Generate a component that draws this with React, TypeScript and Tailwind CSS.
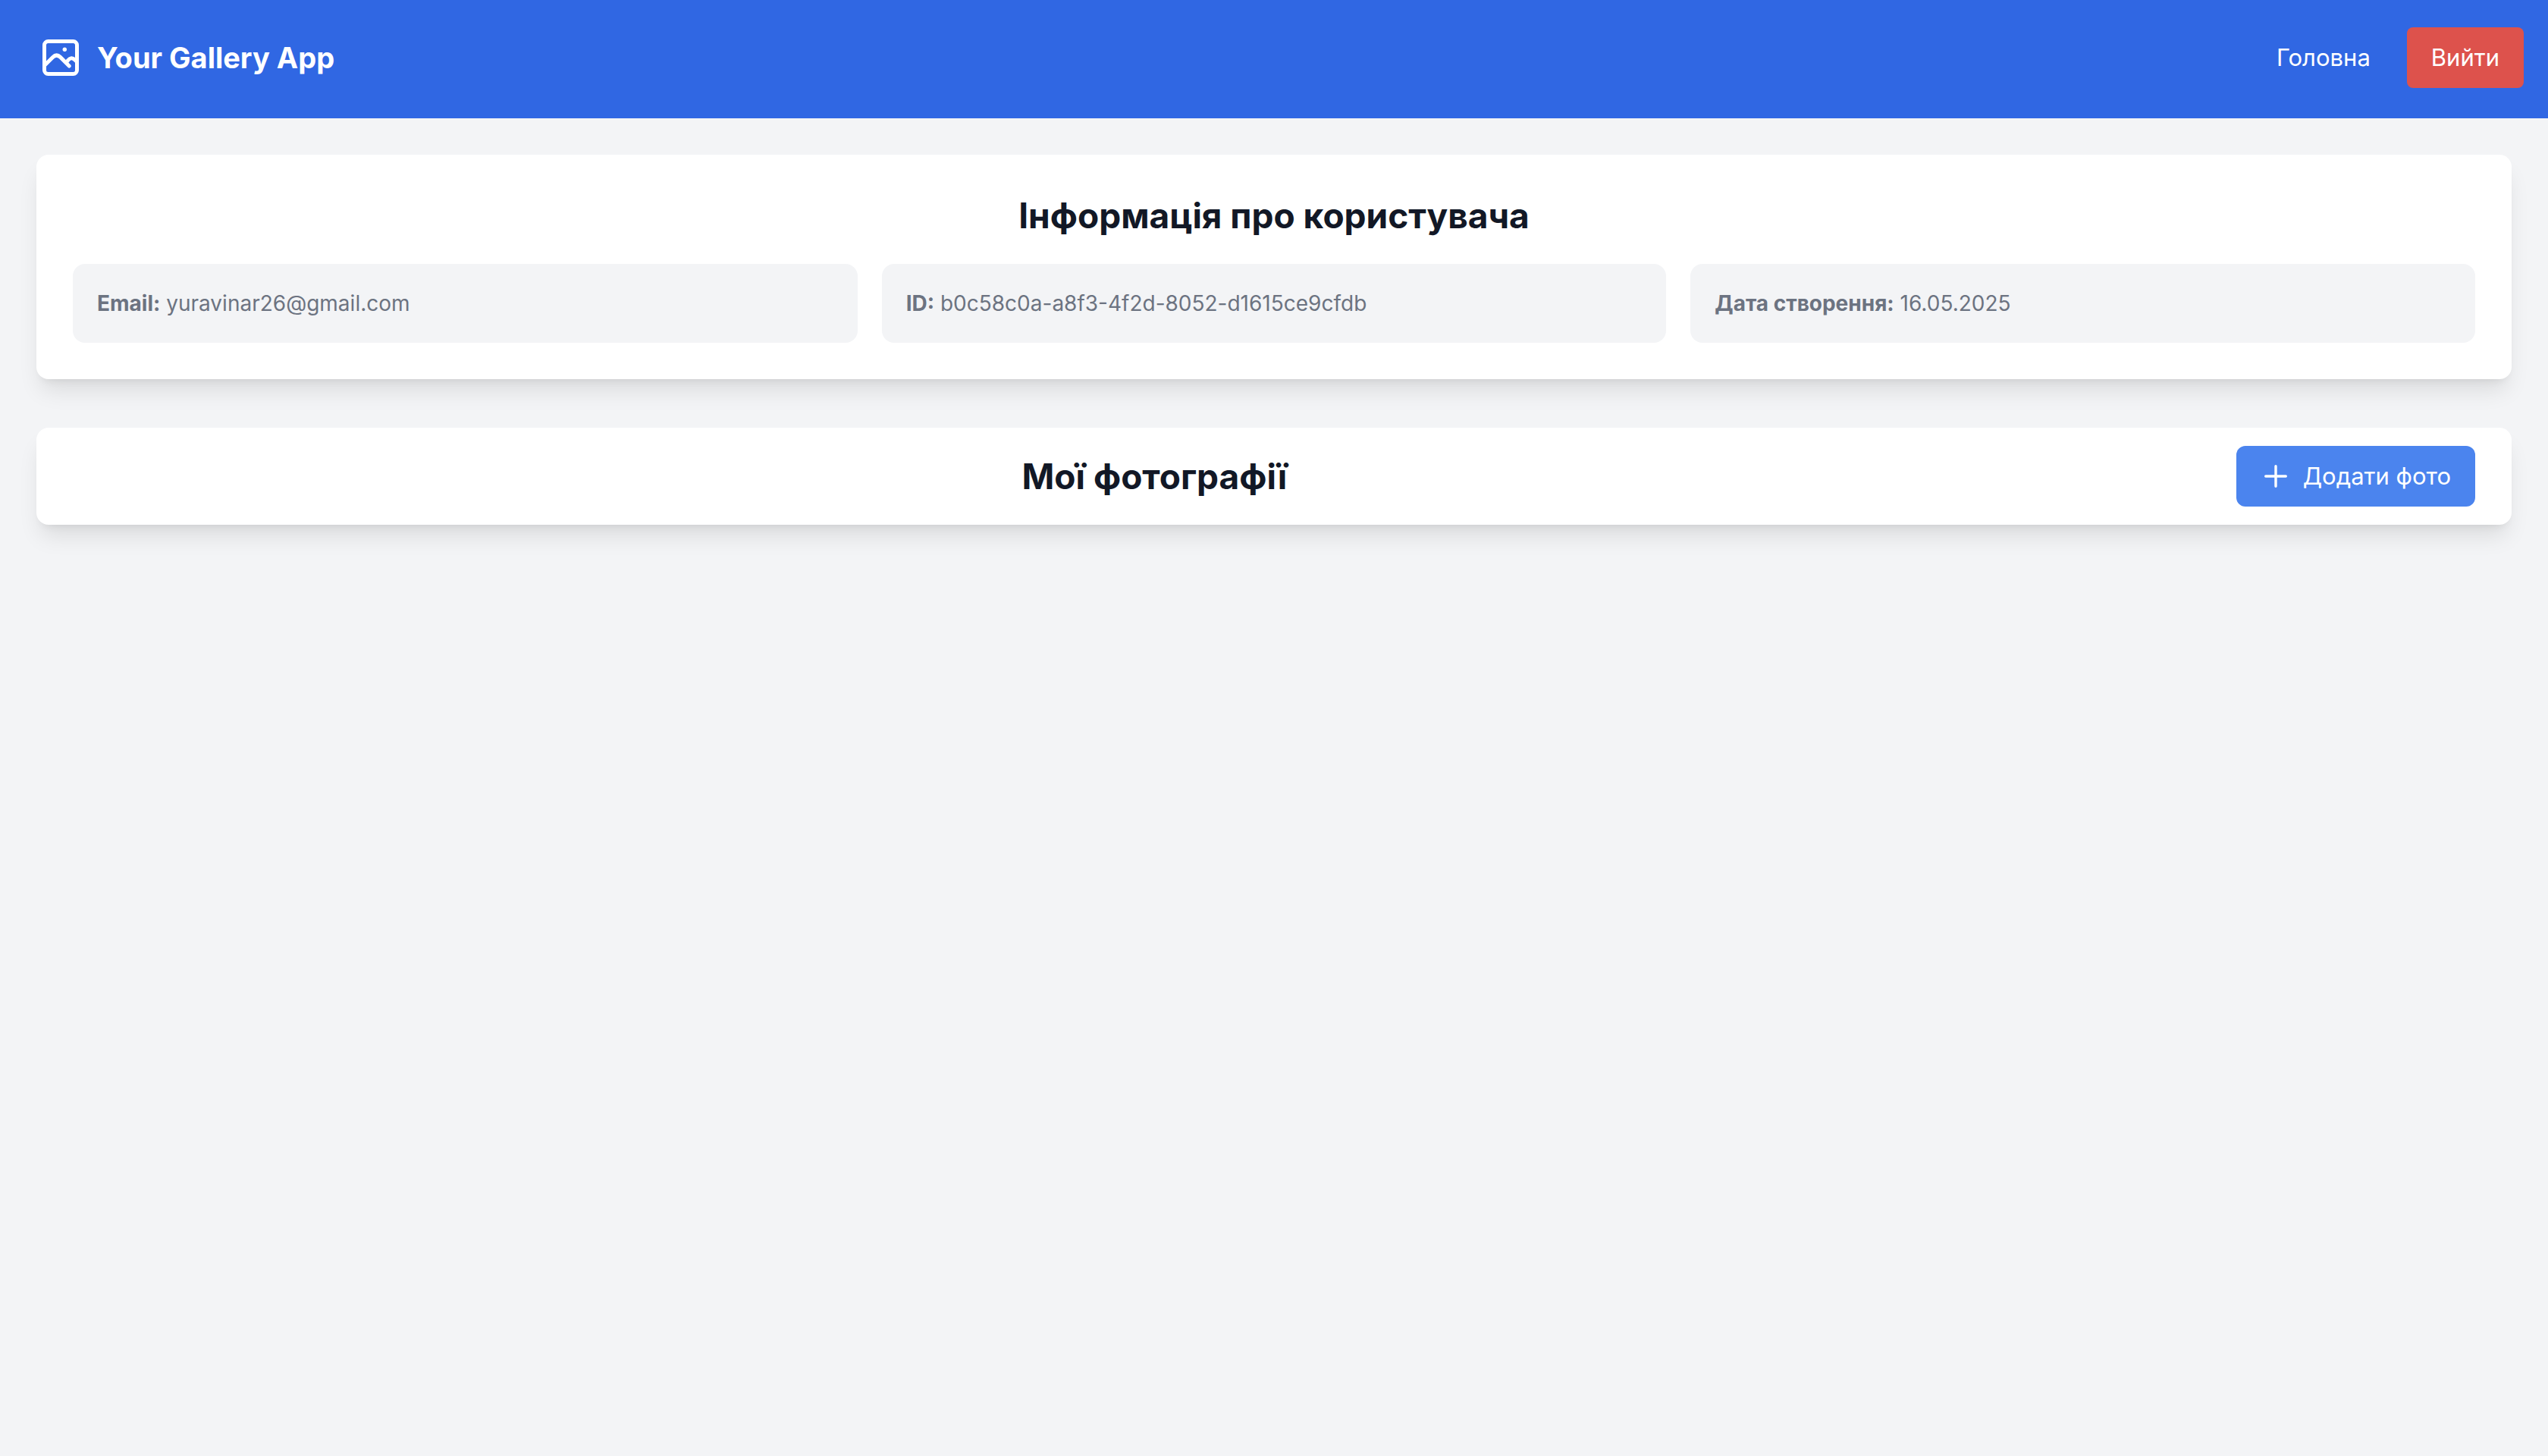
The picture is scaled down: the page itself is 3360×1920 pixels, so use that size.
function GalleryIcon() {
  return (
    <svg
      viewBox="0 0 48 48"
      className="size-12"
      fill="none"
      stroke="currentColor"
      strokeWidth="5"
      strokeLinecap="round"
      strokeLinejoin="round"
      aria-hidden="true"
    >
      <rect x="2.5" y="2.5" width="43" height="43" rx="5" />
      <path d="M2.5 34.5 L13.6 23.4 Q18.6 18.6 23.6 23.4 L35.2 35" />
      <path d="M31.5 30 L33.4 27.8 Q38 22 42.8 27 L45.5 29.6" />
      <circle cx="29.3" cy="13.3" r="2.7" fill="currentColor" stroke="none" />
    </svg>
  );
}

function PlusIcon() {
  return (
    <svg
      viewBox="0 0 40 40"
      className="size-10"
      fill="none"
      stroke="currentColor"
      strokeWidth="3.4"
      strokeLinecap="round"
      aria-hidden="true"
    >
      <path d="M20 6.7v26.6M6.7 20h26.6" />
    </svg>
  );
}

const card =
  "rounded-2xl bg-white px-12 shadow-[0_20px_30px_-6px_rgba(0,0,0,0.1),0_8px_12px_-8px_rgba(0,0,0,0.1)]";

const details = [
  { label: "Email:", value: "yuravinar26@gmail.com" },
  { label: "ID:", value: "b0c58c0a-a8f3-4f2d-8052-d1615ce9cfdb" },
  { label: "Дата створення:", value: "16.05.2025" },
];

export default function App() {
  return (
    <div className="min-h-screen bg-[#f3f4f6] font-['Inter',sans-serif] text-[#121826]">
      <header className="flex items-center justify-between bg-[#3067e3] pt-9 pr-8 pb-10 pl-14 text-white">
        <div className="flex items-center gap-6">
          <GalleryIcon />
          <h1 className="text-[38px] leading-14 font-bold">Your Gallery App</h1>
        </div>
        <nav className="flex items-center gap-12 text-[31px] leading-12">
          <a href="#home">Головна</a>
          <button type="button" className="rounded-lg bg-[#dd524c] px-8 py-4">
            Вийти
          </button>
        </nav>
      </header>

      <main className="flex flex-col gap-16 p-12">
        <section className={`${card} py-12`}>
          <h2 className="mb-8 text-center text-[46px] leading-16 font-bold">
            Інформація про користувача
          </h2>
          <div className="grid grid-cols-3 gap-8">
            {details.map((item) => (
              <p
                key={item.label}
                className="rounded-2xl bg-[#f3f4f6] p-8 text-[28px] leading-10 text-[#6c7381]"
              >
                <strong className="font-bold">{item.label}</strong> {item.value}
              </p>
            ))}
          </div>
        </section>

        <section className={`${card} flex items-center justify-between py-6`}>
          <h2 className="flex-1 text-center text-[46px] leading-16 font-bold">Мої фотографії</h2>
          <button
            type="button"
            className="flex items-center gap-4 rounded-xl bg-[#4b84ee] px-8 py-4 text-[31px] leading-12 text-white"
          >
            <PlusIcon />
            Додати фото
          </button>
        </section>
      </main>
    </div>
  );
}
